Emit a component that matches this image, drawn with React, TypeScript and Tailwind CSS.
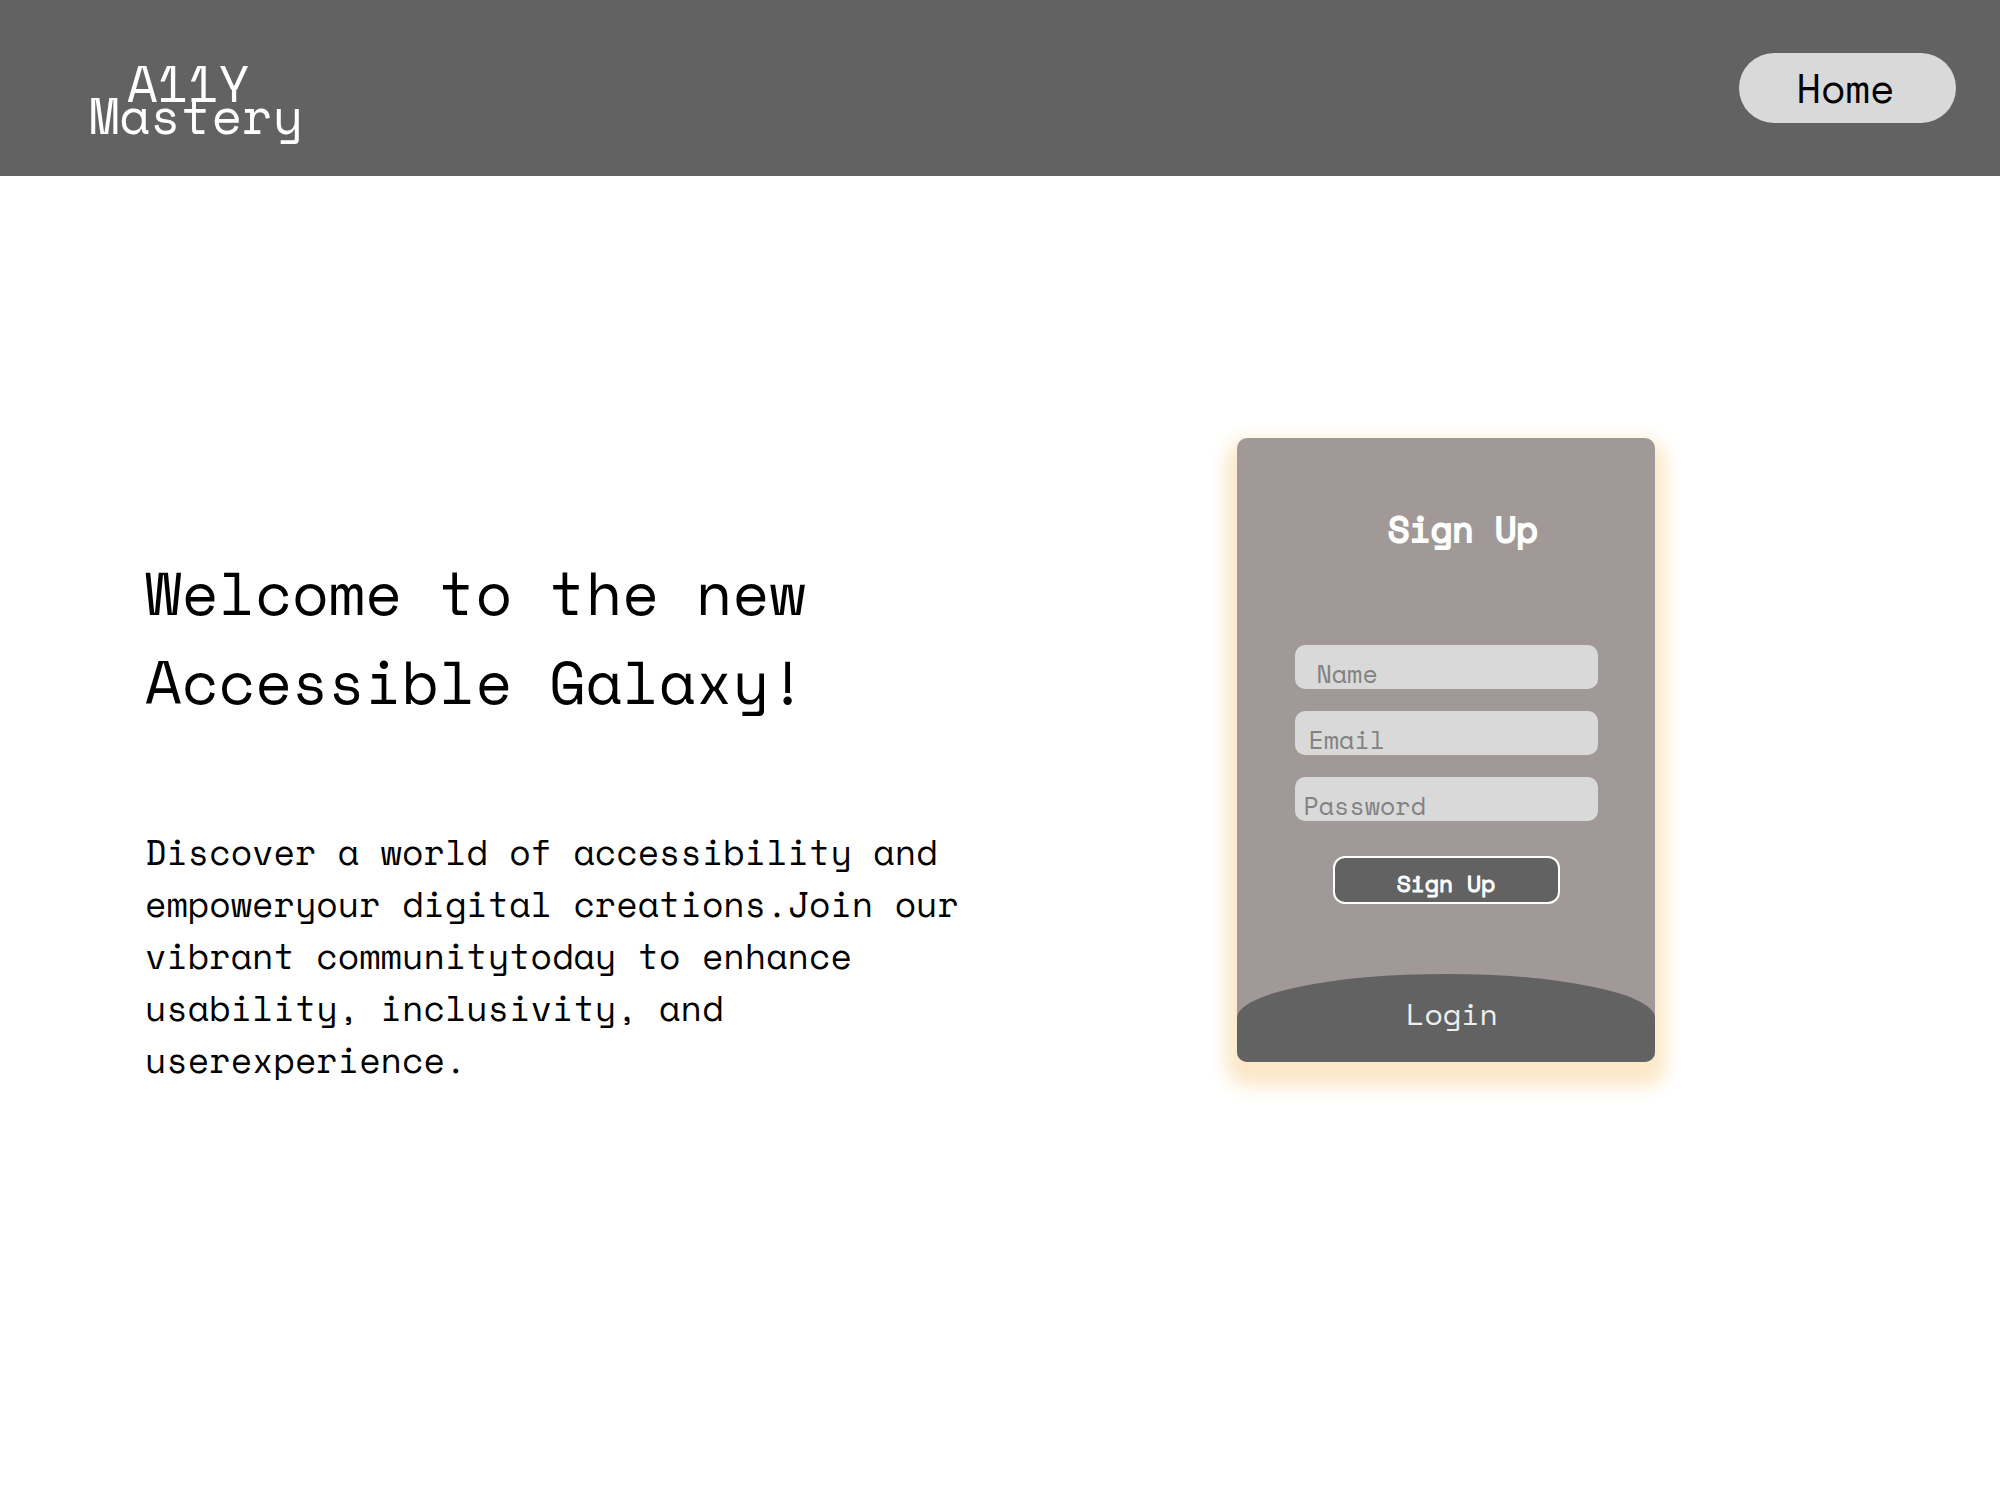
const fields = [
  { name: "name", label: "Name", type: "text", indent: "pl-[22px]" },
  { name: "email", label: "Email", type: "email", indent: "pl-[14px]" },
  { name: "password", label: "Password", type: "password", indent: "pl-[9px]" },
];

function Header() {
  return (
    <header className="flex h-44 items-start justify-between bg-[#626262] pl-[89px] pr-11">
      <a href="#" className="mt-[67px] flex flex-col items-center text-[50px] leading-8 text-white">
        <span className="pr-4">A11Y</span>
        <span>Mastery</span>
      </a>
      <nav className="mt-[53px]">
        <a
          href="#"
          className="flex h-[70px] w-[217px] items-center justify-center rounded-full bg-[#d9d9d9] pr-1 text-[40px] leading-none text-black"
        >
          Home
        </a>
      </nav>
    </header>
  );
}

function Intro() {
  return (
    <section className="pt-[134px] pl-[145px]">
      <h1 className="text-[60px] leading-[89px]">
        Welcome to the new
        <br />
        Accessible Galaxy!
      </h1>
      <p className="mt-[100px] text-[35px] leading-[52px]">
        Discover a world of accessibility and empoweryour digital creations.Join our vibrant communitytoday to
        enhance usability, inclusivity, and userexperience.
      </p>
    </section>
  );
}

function SignUpCard() {
  return (
    <section className="w-[418px] overflow-hidden rounded-[10px] bg-[#a19998] shadow-[0_13px_18px_11px_#fce8c8]">
      <form className="flex flex-col items-center pt-[71px]">
        <h2 className="pl-[34px] text-[35px] leading-10 font-normal text-white [-webkit-text-stroke:2px_white]">
          Sign Up
        </h2>
        <div className="mt-24 flex w-[303px] flex-col gap-[22px]">
          {fields.map((field) => (
            <input
              key={field.name}
              name={field.name}
              type={field.type}
              aria-label={field.label}
              placeholder={field.label}
              className={`h-11 w-full rounded-[10px] bg-[#d9d9d9] pt-[13px] text-[25px] leading-7 text-black placeholder:text-[#828282] ${field.indent}`}
            />
          ))}
        </div>
        <button
          type="submit"
          className="mt-[35px] flex h-12 w-[227px] items-center justify-center rounded-xl border-2 border-white bg-[#626262] pt-1.5 text-[23px] leading-none font-normal text-white [-webkit-text-stroke:1px_white]"
        >
          Sign Up
        </button>
        <a
          href="#"
          className="mt-[70px] flex h-[88px] w-full items-center justify-center rounded-t-[50%] bg-[#626262] pb-2 pl-3 text-[30px] leading-none text-[#eeeeee]"
        >
          Login
        </a>
      </form>
    </section>
  );
}

export default function App() {
  return (
    <div className="min-h-screen bg-white font-['Space_Mono','Liberation_Mono',monospace] text-black">
      <Header />
      <main className="grid min-h-[calc(100vh-176px)] grid-cols-2 items-center pb-44">
        <Intro />
        <div className="flex justify-center pr-[108px]">
          <SignUpCard />
        </div>
      </main>
    </div>
  );
}
